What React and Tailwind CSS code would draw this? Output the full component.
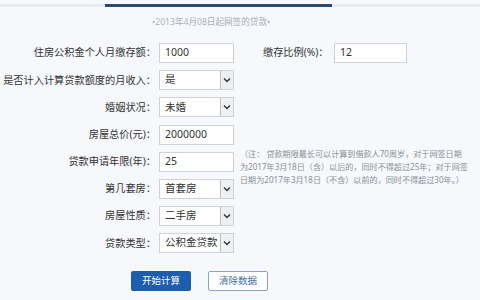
import React from 'react';

const font = { fontFamily: '"Noto Sans", "Noto Sans CJK SC", sans-serif' };

function Label({ children }) {
  return (
    <div className="flex items-center justify-end pr-[3px] text-[10.2px] text-[#333] whitespace-nowrap">
      {children}
    </div>
  );
}

function TextInput({ value, className = '' }) {
  return (
    <div className={`flex h-[20px] items-center border border-[#cfd3d8] bg-white pl-[5px] text-[10.5px] text-[#333] ${className}`}>
      {value}
    </div>
  );
}

function Select({ value }) {
  return (
    <div className="flex h-[20px] w-[75px] items-center border border-[#cfd3d8] bg-white text-[10.5px] text-[#333]">
      <span className="flex-1 pl-[5px] whitespace-nowrap">{value}</span>
      <span className="flex h-full w-[13px] items-center justify-center border-l border-[#b9bec4] bg-[#eef0f2]">
        <svg width="8" height="6" viewBox="0 0 8 6">
          <path d="M1 1.5 L4 4.5 L7 1.5" fill="none" stroke="#333" strokeWidth="1.4" />
        </svg>
      </span>
    </div>
  );
}

export default function App() {
  return (
    <div className="h-[300px] w-[480px] overflow-hidden bg-[#f6f8fb]" style={font}>
      {/* tab underline */}
      <div className="pt-[4px]">
        <div className="h-[3px] w-full bg-[#e7ebef]">
          <div className="ml-[105px] h-[3px] w-[227px] bg-[#2c4a6c]" />
        </div>
      </div>

      <div className="pl-[152px] pt-[9px] text-[8.6px] leading-[12px] text-[#aab0b8] whitespace-nowrap">
        •2013年4月08日起网签的贷款•
      </div>

      <div className="mt-[15px] grid grid-cols-[159px_75px_1fr] grid-rows-[repeat(8,20px)] gap-y-[7.2px]">
        <Label>住房公积金个人月缴存额：</Label>
        <TextInput value="1000" />
        <div className="flex items-center pl-[29px]">
          <span className="w-[71px] text-[10.2px] text-[#333] whitespace-nowrap">缴存比例(%)：</span>
          <TextInput value="12" className="w-[73px]" />
        </div>

        <Label>是否计入计算贷款额度的月收入：</Label>
        <Select value="是" />
        <div />

        <Label>婚姻状况：</Label>
        <Select value="未婚" />
        <div />

        <Label>房屋总价(元)：</Label>
        <TextInput value="2000000" />
        <div />

        <Label>贷款申请年限(年)：</Label>
        <TextInput value="25" />
        <div className="row-span-3 -mt-[5px] pl-[6px] text-[8.1px] leading-[13px] text-[#8a9097]">
          <p className="whitespace-nowrap">（注： 贷款期限最长可以计算到借款人70周岁，对于网签日期</p>
          <p className="whitespace-nowrap">为2017年3月18日（含）以后的，同时不得超过25年；对于网签</p>
          <p className="whitespace-nowrap">日期为2017年3月18日（不含）以前的，同时不得超过30年。）</p>
        </div>

        <Label>第几套房：</Label>
        <Select value="首套房" />

        <Label>房屋性质：</Label>
        <Select value="二手房" />

        <Label>贷款类型：</Label>
        <Select value="公积金贷款" />
        <div />
      </div>

      <div className="mt-[18px] flex gap-[17px] pl-[131px]">
        <button className="h-[20px] w-[60px] rounded-[2px] bg-[#1d5daf] text-[9.5px] text-white">开始计算</button>
        <button className="h-[20px] w-[60px] rounded-[2px] border border-[#8aa3c2] bg-white text-[9.5px] text-[#3f6fa6]">清除数据</button>
      </div>
    </div>
  );
}
